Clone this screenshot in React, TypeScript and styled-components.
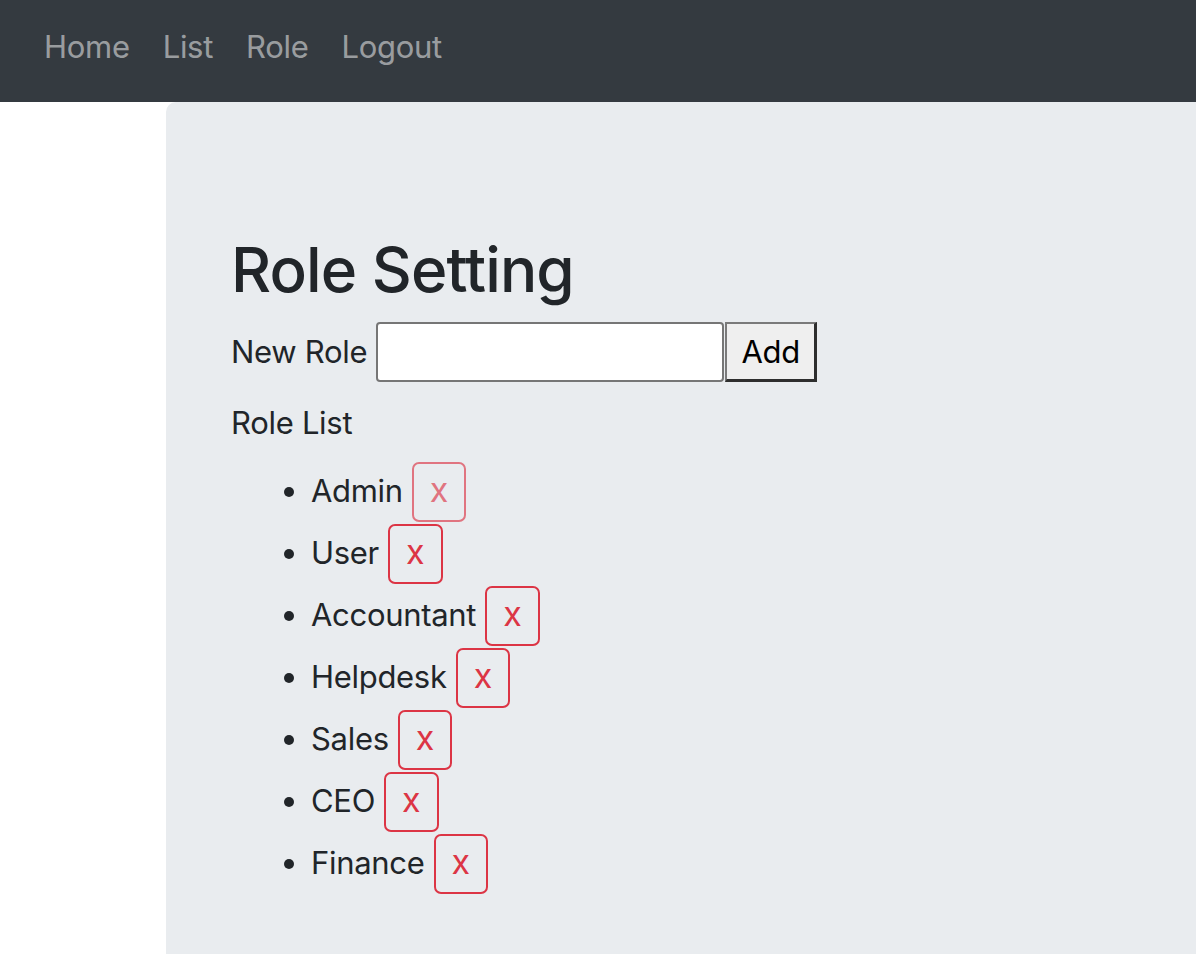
import React from "react";
import styled, { createGlobalStyle } from "styled-components";

const GlobalStyle = createGlobalStyle`
  html, body { margin: 0; padding: 0; background: #ffffff; }
  body {
    font-family: Inter, "Noto Sans", "Liberation Sans", sans-serif;
    font-size: 31px;
    letter-spacing: -0.3px;
    line-height: 48px;
    color: #212529;
  }
  * { box-sizing: border-box; }
`;

const NavBar = styled.nav`
  height: 102px;
  background: #343a40;
  display: flex;
  align-items: flex-start;
  padding: 23px 0 0 44px;
  gap: 33px;
`;

const NavLink = styled.a`
  color: rgba(255, 255, 255, 0.52);
  text-decoration: none;
  font-size: 31px;
  line-height: 48px;
`;

const Page = styled.div`
  display: flex;
  padding-left: 166px;
`;

const Jumbotron = styled.main`
  flex: 1;
  min-height: calc(100vh - 102px);
  background: #e9ecef;
  border-top-left-radius: 10px;
  padding: 131px 0 40px 65px;
`;

const Title = styled.h1`
  margin: 0;
  font-size: 62px;
  letter-spacing: -0.9px;
  line-height: 74px;
  font-weight: 500;
`;

const FormRow = styled.div`
  display: flex;
  align-items: center;
  margin-top: 15px;
  height: 60px;
`;

const Label = styled.label`
  margin-right: 9px;
`;

const TextInput = styled.input`
  width: 348px;
  height: 60px;
  border: 2px solid #767676;
  border-radius: 4px;
  background: #ffffff;
  font: inherit;
  padding: 0 8px;
`;

const AddButton = styled.button`
  width: 92px;
  height: 60px;
  margin-left: 1px;
  background: #efefef;
  border-style: solid;
  border-width: 2px 3px 3px 2px;
  border-color: #7a7a7a #2e2e2e #2e2e2e #7a7a7a;
  font-family: inherit;
  font-size: 31px;
  letter-spacing: -0.3px;
  color: #000000;
  padding: 0;
`;

const SubTitle = styled.p`
  margin: 17px 0 0;
`;

const RoleList = styled.ul`
  margin: 15px 0 0;
  padding-left: 80px;
  list-style: disc;
`;

const RoleItem = styled.li`
  margin-bottom: 2px;
`;

const DeleteButton = styled.button<{ $faded?: boolean }>`
  display: inline-block;
  vertical-align: baseline;
  margin-left: 9px;
  height: 60px;
  padding: 0 16px 4px;
  border: 2px solid #dc3545;
  border-radius: 7px;
  background: transparent;
  color: #dc3545;
  font-family: inherit;
  font-size: 34px;
  line-height: 52px;
  opacity: ${(p) => (p.$faded ? 0.65 : 1)};
`;

const roles = ["Admin", "User", "Accountant", "Helpdesk", "Sales", "CEO", "Finance"];

export default function App() {
  return (
    <>
      <GlobalStyle />
      <NavBar>
        <NavLink href="#">Home</NavLink>
        <NavLink href="#">List</NavLink>
        <NavLink href="#">Role</NavLink>
        <NavLink href="#">Logout</NavLink>
      </NavBar>
      <Page>
        <Jumbotron>
          <Title>Role Setting</Title>
          <FormRow>
            <Label>New Role</Label>
            <TextInput type="text" />
            <AddButton>Add</AddButton>
          </FormRow>
          <SubTitle>Role List</SubTitle>
          <RoleList>
            {roles.map((r, i) => (
              <RoleItem key={r}>
                {r}
                <DeleteButton $faded={i === 0}>x</DeleteButton>
              </RoleItem>
            ))}
          </RoleList>
        </Jumbotron>
      </Page>
    </>
  );
}
